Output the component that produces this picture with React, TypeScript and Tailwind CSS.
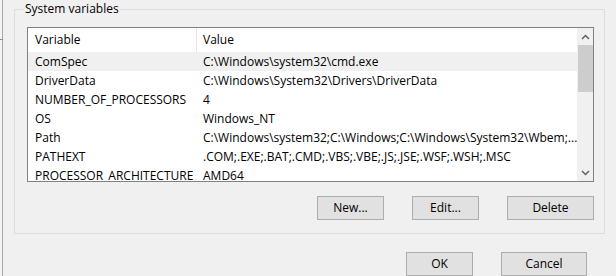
import React from "react";

const rows: [string, string][] = [
  ["ComSpec", "C:\\Windows\\system32\\cmd.exe"],
  ["DriverData", "C:\\Windows\\System32\\Drivers\\DriverData"],
  ["NUMBER_OF_PROCESSORS", "4"],
  ["OS", "Windows_NT"],
  ["Path", "C:\\Windows\\system32;C:\\Windows;C:\\Windows\\System32\\Wbem;..."],
  ["PATHEXT", ".COM;.EXE;.BAT;.CMD;.VBS;.VBE;.JS;.JSE;.WSF;.WSH;.MSC"],
  ["PROCESSOR_ARCHITECTURE", "AMD64"],
];

function Btn({ label, w }: { label: string; w: string }) {
  return (
    <div
      className={`${w} h-[24px] border border-[#adadad] bg-[#e1e1e1] flex items-center justify-center text-[12px] text-black`}
    >
      {label}
    </div>
  );
}

export default function App() {
  return (
    <div
      className="w-[616px] h-[276px] bg-[#f0f0f0] flex overflow-hidden text-black"
      style={{ fontFamily: '"Open Sans", "Noto Sans", sans-serif' }}
    >
      <div className="relative w-[3px] shrink-0 bg-[#f4f4f4] border-r border-[#a8a8a8]">
        <div className="absolute left-0 top-[39px] w-[3px] h-px bg-[#8a8a8a]" />
      </div>
      <div className="flex flex-col pl-[11px] pt-[9px]">
        <div className="relative w-[591px] h-[225px] border border-[#dcdcdc] pl-[12px] pt-[17px]">
          <div className="absolute left-[9px] -top-[9px] px-px bg-[#f0f0f0] text-[12px] leading-[16px]">
            System variables
          </div>
          <div className="w-[567px] h-[155px] border border-[#828282] bg-white flex overflow-hidden">
            <div className="flex-1 flex flex-col text-[12px]">
              <div className="h-[24px] shrink-0 flex">
                <div className="w-[169px] border-r border-[#e5e5e5] pl-[7px] flex items-center">Variable</div>
                <div className="pl-[6px] flex items-center">Value</div>
              </div>
              {rows.map(([k, v], i) => (
                <div
                  key={k}
                  className={`h-[19px] shrink-0 flex items-center whitespace-nowrap ${i === 0 ? "bg-[#f0f0f0]" : ""}`}
                >
                  <div className="w-[169px] shrink-0 pl-[7px]">{k}</div>
                  <div className="pl-[6px]">{v}</div>
                </div>
              ))}
            </div>
            <div className="w-[17px] shrink-0 bg-[#f0f0f0] flex flex-col">
              <div className="h-[17px] flex items-center justify-center">
                <svg width="9" height="6" viewBox="0 0 9 6">
                  <path d="M1 5 L4.5 1.5 L8 5" fill="none" stroke="#606060" strokeWidth="1.5" />
                </svg>
              </div>
              <div className="mx-px h-[47px] bg-[#cdcdcd]" />
              <div className="flex-1" />
              <div className="h-[17px] flex items-center justify-center">
                <svg width="9" height="6" viewBox="0 0 9 6">
                  <path d="M1 1 L4.5 4.5 L8 1" fill="none" stroke="#606060" strokeWidth="1.5" />
                </svg>
              </div>
            </div>
          </div>
          <div className="mt-[14px] w-[567px] flex justify-end gap-[28px]">
            <Btn label="New..." w="w-[67px]" />
            <Btn label="Edit..." w="w-[67px]" />
            <Btn label="Delete" w="w-[87px]" />
          </div>
        </div>
        <div className="mt-[18px] w-[573px] flex justify-end gap-[28px]">
          <Btn label="OK" w="w-[67px]" />
          <Btn label="Cancel" w="w-[86px]" />
        </div>
      </div>
    </div>
  );
}
